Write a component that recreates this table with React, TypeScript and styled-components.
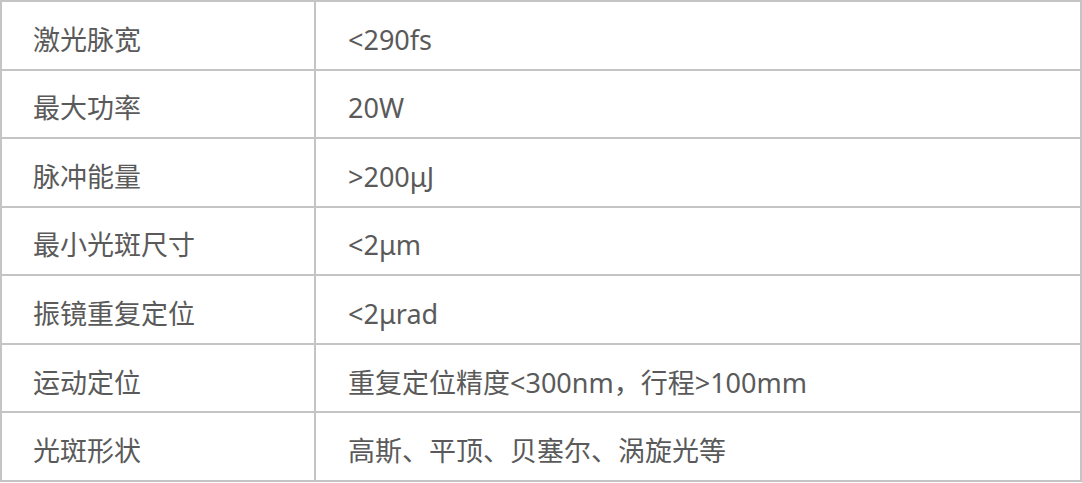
import React from "react";
import styled, { createGlobalStyle } from "styled-components";

const Global = createGlobalStyle`
  html, body { margin: 0; padding: 0; background: #ffffff; }
  * { box-sizing: border-box; }
`;

const Table = styled.div`
  width: 1082px;
  height: 482px;
  display: grid;
  grid-template-columns: 314px 1fr;
  grid-template-rows: repeat(7, 1fr);
  border-top: 2px solid #c4c4c4;
  border-left: 2px solid #c4c4c4;
  font-family: "Noto Sans", "Noto Sans CJK SC", sans-serif;
  color: #5a5a5a;
  font-size: 27px;
`;

const Cell = styled.div<{ $pad: number }>`
  display: flex;
  align-items: center;
  padding: 8px 0 0 ${(p) => p.$pad}px;
  border-right: 2px solid #c4c4c4;
  border-bottom: 2px solid #c4c4c4;
  white-space: nowrap;
  line-height: 1;
`;

const rows: [string, string][] = [
  ["激光脉宽", "<290fs"],
  ["最大功率", "20W"],
  ["脉冲能量", ">200μJ"],
  ["最小光斑尺寸", "<2μm"],
  ["振镜重复定位", "<2μrad"],
  ["运动定位", "重复定位精度<300nm，行程>100mm"],
  ["光斑形状", "高斯、平顶、贝塞尔、涡旋光等"],
];

export default function App() {
  return (
    <>
      <Global />
      <Table>
        {rows.map(([k, v]) => (
          <React.Fragment key={k}>
            <Cell $pad={31}>{k}</Cell>
            <Cell $pad={32}>{v}</Cell>
          </React.Fragment>
        ))}
      </Table>
    </>
  );
}
